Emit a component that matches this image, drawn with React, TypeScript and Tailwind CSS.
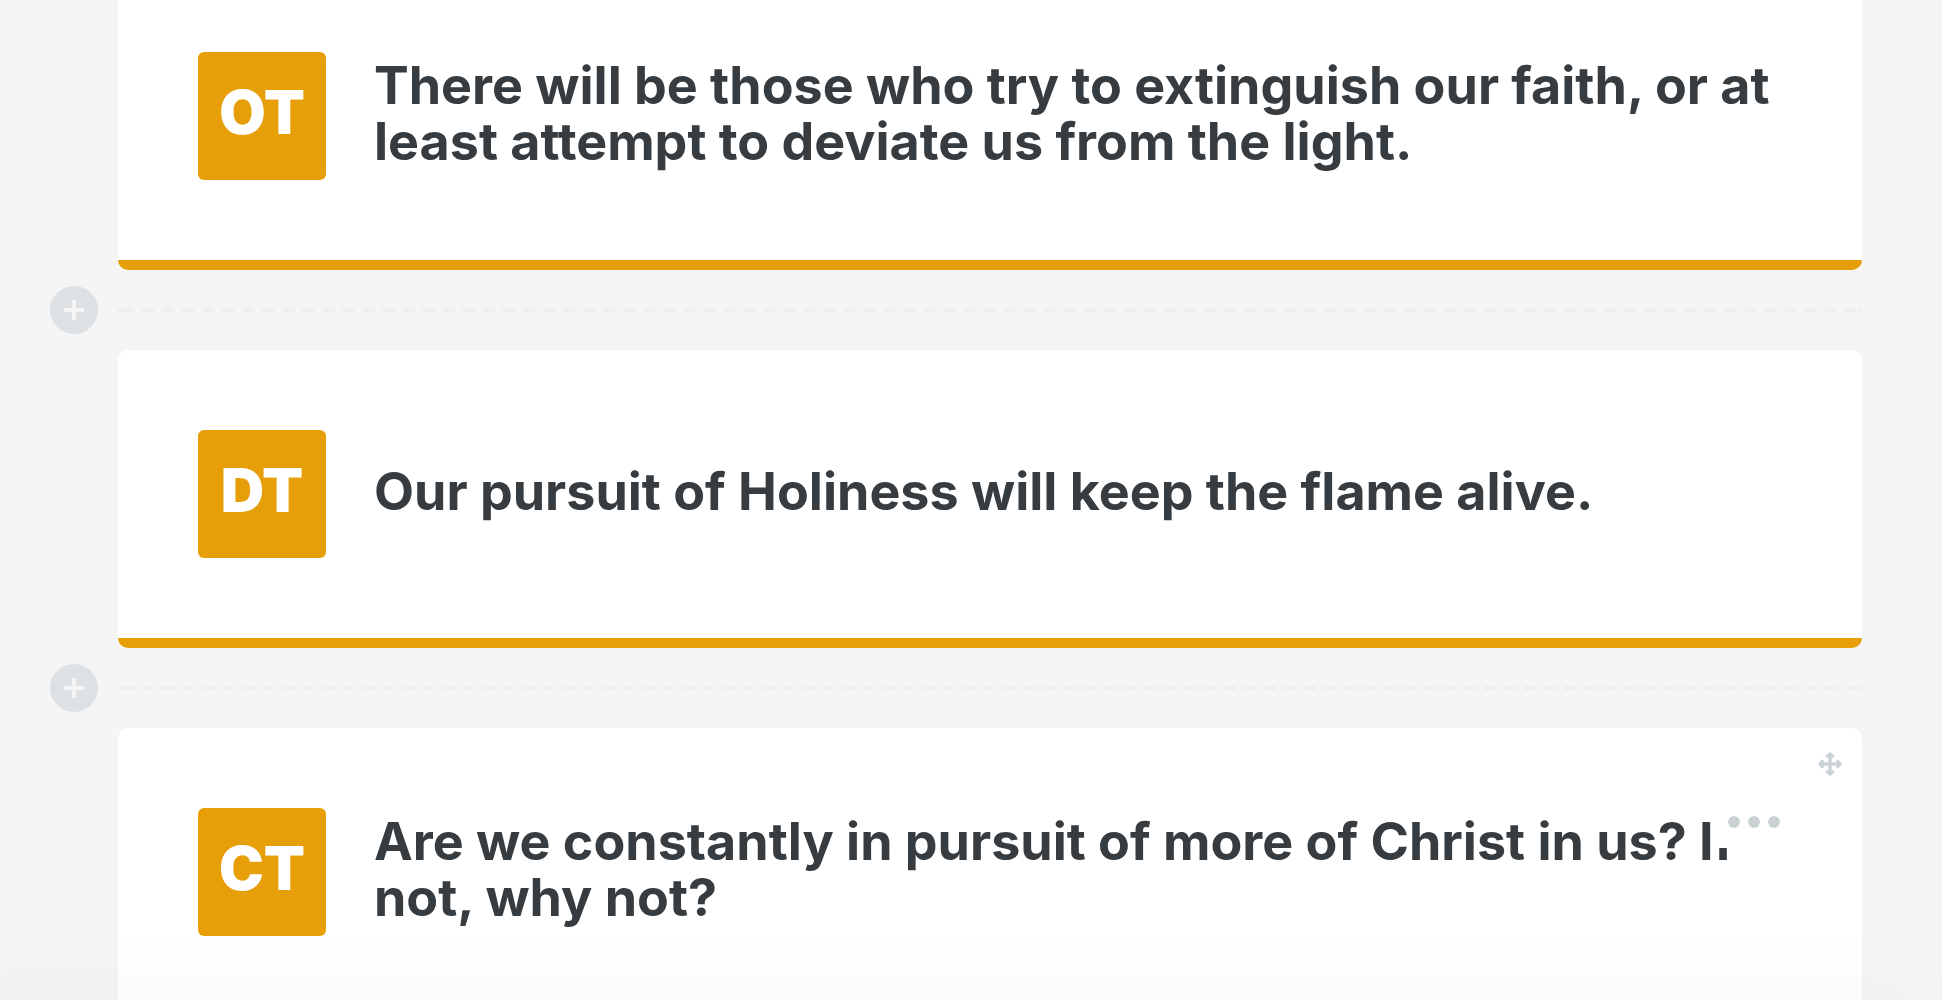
import React from "react";

type Note = {
  id: number;
  initials: string;
  text: string;
  active?: boolean;
};

const notes: Note[] = [
  {
    id: 1,
    initials: "OT",
    text: "There will be those who try to extinguish our faith, or at least attempt to deviate us from the light.",
  },
  {
    id: 2,
    initials: "DT",
    text: "Our pursuit of Holiness will keep the flame alive.",
  },
  {
    id: 3,
    initials: "CT",
    text: "Are we constantly in pursuit of more of Christ in us? If not, why not?",
    active: true,
  },
];

/* ---------------- ICONS ---------------- */

function PlusIcon() {
  return (
    <svg width="20" height="20" viewBox="0 0 20 20" aria-hidden="true">
      <path d="M8 0h4v8h8v4h-8v8H8v-8H0V8h8z" fill="currentColor" />
    </svg>
  );
}

function MoveIcon() {
  return (
    <svg width="24" height="24" viewBox="0 0 24 24" aria-hidden="true">
      <path
        d="M12.5.3 16 3.8V5.4H13.5V10.5H18.6V8H20.2L23.7 11.5V12.5L20.2 16H18.6V13.5H13.5V18.6H16V20.2L12.5 23.7H11.5L8 20.2V18.6H10.5V13.5H5.4V16H3.8L.3 12.5V11.5L3.8 8H5.4V10.5H10.5V5.4H8V3.8L11.5.3Z"
        fill="currentColor"
        stroke="currentColor"
        strokeWidth="0.4"
        strokeLinejoin="round"
      />
    </svg>
  );
}

function DotsIcon() {
  return (
    <svg width="52" height="12" viewBox="0 0 52 12" fill="currentColor" aria-hidden="true">
      <circle cx="6" cy="6" r="6" />
      <circle cx="26" cy="6" r="6" />
      <circle cx="46" cy="6" r="6" />
    </svg>
  );
}

/* ---------------- ROWS ---------------- */

function NoteCard({ note }: { note: Note }) {
  return (
    <article className="relative ml-[118px] mr-20 flex items-center gap-12 rounded-[10px] border-b-[10px] border-[#e69f08] bg-white p-20">
      <div className="flex size-32 shrink-0 items-center justify-center rounded-md bg-[#e69f08] pb-2 text-[60px] leading-none font-black text-white">
        {note.initials}
      </div>
      <h2 className="flex-1 pb-1 text-[52px] leading-14 font-bold text-[#363c40]">
        {note.text}
      </h2>

      {note.active && (
        <>
          <button
            type="button"
            aria-label="Move"
            className="absolute top-6 right-5 text-[#cbd2d6]"
          >
            <MoveIcon />
          </button>
          <button
            type="button"
            aria-label="More options"
            className="absolute top-[68px] right-[62px] bg-white py-5 pr-5 pl-3.5 text-[#cbd2d6]"
          >
            <DotsIcon />
          </button>
        </>
      )}
    </article>
  );
}

function InsertRow() {
  return (
    <div className="flex h-20 items-center gap-5 pr-20 pl-[50px]">
      <button
        type="button"
        aria-label="Add item"
        className="flex size-12 shrink-0 items-center justify-center rounded-full bg-[#dde1e4] text-[#f5f5f5]"
      >
        <PlusIcon />
      </button>
      {/* dashes are tiled so that both ends land on a full dash */}
      <div className="h-1 flex-1 border-x-4 border-[#edeff0] bg-[linear-gradient(90deg,transparent_20%,#edeff0_20%,#edeff0_80%,transparent_80%)] bg-[length:20px_4px] bg-origin-border [background-repeat:round_no-repeat]" />
    </div>
  );
}

/* ---------------- PAGE ---------------- */

export default function App() {
  return (
    <main className="h-screen overflow-hidden bg-[#f5f5f5] font-['Inter','Liberation_Sans',sans-serif]">
      {/* list is scrolled a little, the first card is cut at the top */}
      <div className="-mt-7">
        {notes.map((note, i) => (
          <React.Fragment key={note.id}>
            {i > 0 && <InsertRow />}
            <NoteCard note={note} />
          </React.Fragment>
        ))}
      </div>

      {/* shadow of the panel docked below the window */}
      <div className="pointer-events-none fixed top-full right-5 -left-20 h-40 rounded-[40px] shadow-[0_0_100px_rgba(0,0,0,0.04)]" />
    </main>
  );
}
